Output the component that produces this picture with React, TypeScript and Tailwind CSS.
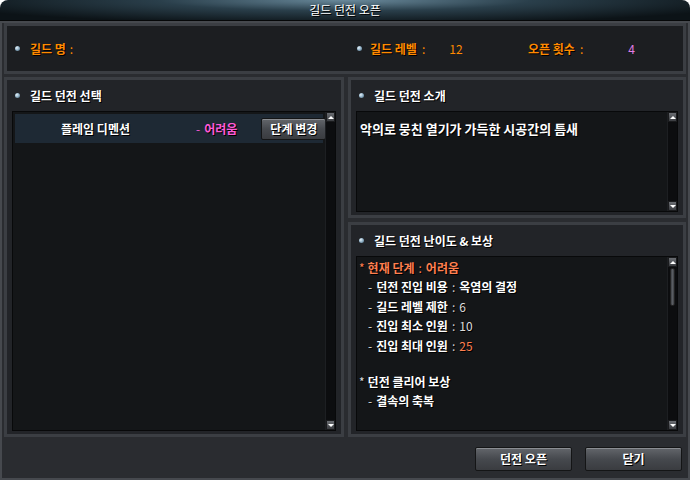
import type { ReactNode } from 'react';

const font = "font-['Noto_Sans_CJK_KR','Noto_Sans',sans-serif]";
const shadow = '[text-shadow:1px_1px_0_#000]';

const Bullet = () => (
  <span className="inline-block shrink-0 w-[5px] h-[5px] rounded-full bg-[radial-gradient(circle_at_35%_35%,#e6f2fa_0%,#8fb0c6_50%,#3f5868_100%)]" />
);

const ScrollBar = ({ thumb }: { thumb?: boolean }) => (
  <div className="w-[10px] shrink-0 h-full flex flex-col bg-[#0c0d0f] border-l border-[#1d1f22]">
    <div className="h-[10px] bg-[linear-gradient(#6a6d72,#3a3c40)] border border-[#1a1b1d] flex items-center justify-center">
      <span className="w-0 h-0 border-l-[3px] border-r-[3px] border-b-[3px] border-l-transparent border-r-transparent border-b-white" />
    </div>
    <div className="flex-1 px-[1px] pt-[1px]">
      {thumb && (
        <div className="h-[38px] mx-[1px] rounded-[2px] bg-[linear-gradient(90deg,#3c3f44,#5a5d62,#3c3f44)] border border-[#222]" />
      )}
    </div>
    <div className="h-[10px] bg-[linear-gradient(#6a6d72,#3a3c40)] border border-[#1a1b1d] flex items-center justify-center">
      <span className="w-0 h-0 border-l-[3px] border-r-[3px] border-t-[3px] border-l-transparent border-r-transparent border-t-white" />
    </div>
  </div>
);

const Panel = ({ title, className, children }: { title: ReactNode; className?: string; children: ReactNode }) => (
  <div className={`border-[3px] border-[#3b3e43] bg-[#222428] flex flex-col ${className ?? ''}`}>
    <div className="h-[31px] shrink-0 flex items-center pl-[8px] gap-[10px]">
      <Bullet />
      <span className={`text-[12px] font-bold text-white ${shadow}`}>{title}</span>
    </div>
    <div className="flex-1 px-[5px] pb-[3px] flex flex-col">
      <div className="flex-1 flex border border-[#08090a] bg-[#141618]">{children}</div>
    </div>
  </div>
);

const GameButton = ({ label, className }: { label: string; className?: string }) => (
  <button
    className={`shrink-0 whitespace-nowrap flex items-center justify-center rounded-[2px] border border-[#141516] bg-[linear-gradient(#63666b,#46494e_50%,#3a3c40)] shadow-[inset_0_1px_0_#8a8d92] text-[12px] font-bold text-white ${shadow} ${className ?? ''}`}
  >
    {label}
  </button>
);

const Line = ({ label, value, valueClass }: { label: string; value: string; valueClass?: string }) => (
  <div className="pl-[9px] flex whitespace-nowrap">
    <span className="text-[#ddd] mr-[4px]">-</span>
    <span className="font-bold text-white">{label}</span>
    <span className="text-[#ccc] mx-[4px]">:</span>
    <span className={valueClass}>{value}</span>
  </div>
);

export default function App() {
  return (
    <div className={`w-[690px] h-[480px] bg-white flex flex-col ${font}`}>
      <div className="h-[21px] shrink-0 rounded-t-[8px] flex items-center justify-center bg-[radial-gradient(ellipse_60%_120%_at_50%_0%,#6a8a9c_0%,#2a3f4b_45%,#0c1317_100%)] border-b border-[#050708]">
        <span className={`text-[12px] text-white ${shadow}`}>길드 던전 오픈</span>
      </div>

      <div className="flex-1 flex flex-col border-2 border-[#46494e] bg-[#2a2c30] px-[2px]">
        <div className="h-[51px] shrink-0 border-[3px] border-[#3b3e43] bg-[#1c1e21] flex items-center text-[12px] whitespace-nowrap">
          <div className="w-[350px] flex items-center pl-[8px]">
            <Bullet />
            <span className={`ml-[10px] font-bold text-[#ff8a00] ${shadow}`}>길드 명</span>
            <span className="ml-[4px] text-[#ff8a00]">:</span>
          </div>
          <div className="w-[171px] flex items-center">
            <Bullet />
            <span className={`ml-[8px] w-[52px] font-bold text-[#ff8a00] ${shadow}`}>길드 레벨</span>
            <span className="text-[#ff8a00]">:</span>
            <span className="ml-[24px] text-[#ff8a00]">12</span>
          </div>
          <div className="flex items-center">
            <span className={`w-[52px] font-bold text-[#ff8a00] ${shadow}`}>오픈 횟수</span>
            <span className="text-[#ff8a00]">:</span>
            <span className="ml-[45px] text-[#e27de6]">4</span>
          </div>
        </div>

        <div className="h-[360px] shrink-0 mt-[3px] flex gap-[4px]">
          <Panel title="길드 던전 선택" className="w-[340px]">
            <div className="flex-1 min-w-0 p-[2px]">
              <div className="h-[29px] bg-[#1e2934] flex items-center text-[12px] whitespace-nowrap">
                <span className={`ml-[46px] w-[135px] shrink-0 font-bold text-white ${shadow}`}>플레임 디멘션</span>
                <span className="text-[#ff5ad8]">-</span>
                <span className={`ml-[4px] font-bold text-[#ff5ad8] ${shadow}`}>어려움</span>
                <GameButton label="단계 변경" className="ml-[24px] w-[65px] h-[22px]" />
              </div>
            </div>
            <ScrollBar />
          </Panel>

          <div className="flex-1 flex flex-col gap-[4px]">
            <Panel title="길드 던전 소개" className="h-[141px]">
              <div className="flex-1 pl-[3px] pt-[3px]">
                <span className={`text-[13px] font-bold text-white ${shadow}`}>악의로 뭉친 열기가 가득한 시공간의 틈새</span>
              </div>
              <ScrollBar />
            </Panel>

            <Panel title="길드 던전 난이도 & 보상" className="flex-1">
              <div className={`flex-1 pl-[2px] pt-[1px] text-[12px] leading-[19.4px] ${shadow}`}>
                <div className="flex">
                  <span className="text-[#ff7f4f] mr-[3px]">*</span>
                  <span className="font-bold text-[#ff7f4f]">현재 단계</span>
                  <span className="text-[#ff7f4f] mx-[4px]">:</span>
                  <span className="font-bold text-[#ff7f4f]">어려움</span>
                </div>
                <Line label="던전 진입 비용" value="옥염의 결정" valueClass="font-bold text-white" />
                <Line label="길드 레벨 제한" value="6" valueClass="text-[#ddd]" />
                <Line label="진입 최소 인원" value="10" valueClass="text-[#ddd]" />
                <Line label="진입 최대 인원" value="25" valueClass="text-[#ff7f4f]" />
                <div className="h-[17px]" />
                <div className="flex">
                  <span className="text-[#ddd] mr-[3px]">*</span>
                  <span className="font-bold text-white">던전 클리어 보상</span>
                </div>
                <div className="pl-[9px] flex">
                  <span className="text-[#ddd] mr-[4px]">-</span>
                  <span className="font-bold text-white">결속의 축복</span>
                </div>
              </div>
              <ScrollBar thumb />
            </Panel>
          </div>
        </div>

        <div className="flex-1 flex justify-end items-start pt-[10px] pr-[4px] gap-[13px]">
          <GameButton label="던전 오픈" className="w-[97px] h-[24px]" />
          <GameButton label="닫기" className="w-[97px] h-[24px]" />
        </div>
      </div>
    </div>
  );
}
